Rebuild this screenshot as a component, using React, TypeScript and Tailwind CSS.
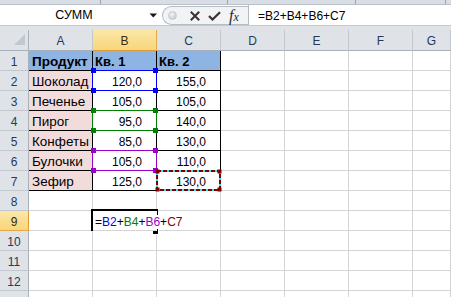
import React from 'react';

const COLS = ['A', 'B', 'C', 'D', 'E', 'F', 'G'];

type CellDef = { text?: React.ReactNode; kind?: 'label' | 'num' | 'head' };

const table: Record<number, CellDef[]> = {
  1: [
    { text: 'Продукт', kind: 'head' },
    { text: 'Кв. 1', kind: 'head' },
    { text: 'Кв. 2', kind: 'head' },
  ],
  2: [{ text: 'Шоколад', kind: 'label' }, { text: '120,0', kind: 'num' }, { text: '155,0', kind: 'num' }],
  3: [{ text: 'Печенье', kind: 'label' }, { text: '105,0', kind: 'num' }, { text: '105,0', kind: 'num' }],
  4: [{ text: 'Пирог', kind: 'label' }, { text: '95,0', kind: 'num' }, { text: '140,0', kind: 'num' }],
  5: [{ text: 'Конфеты', kind: 'label' }, { text: '85,0', kind: 'num' }, { text: '130,0', kind: 'num' }],
  6: [{ text: 'Булочки', kind: 'label' }, { text: '105,0', kind: 'num' }, { text: '110,0', kind: 'num' }],
  7: [{ text: 'Зефир', kind: 'label' }, { text: '125,0', kind: 'num' }, { text: '130,0', kind: 'num' }],
};

function Corner({ x, y, color }: { x: number; y: number; color: string }) {
  return (
    <div
      className="absolute w-[5px] h-[5px] z-20"
      style={{ left: x, top: y, backgroundColor: color }}
    />
  );
}

function RangeBox({ top, color }: { top: number; color: string }) {
  return (
    <>
      <div
        className="absolute z-20 border pointer-events-none"
        style={{ left: 92, top, width: 65, height: 21, borderColor: color }}
      />
      <Corner x={91} y={top - 2} color={color} />
      <Corner x={153} y={top - 2} color={color} />
      <Corner x={91} y={top + 18} color={color} />
      <Corner x={153} y={top + 18} color={color} />
    </>
  );
}

function FormulaText() {
  return (
    <>
      <span className="text-black">=</span>
      <span className="text-[#0000ff]">B2</span>
      <span className="text-black">+</span>
      <span className="text-[#008000]">B4</span>
      <span className="text-black">+</span>
      <span className="text-[#9900cc]">B6</span>
      <span className="text-black">+</span>
      <span className="text-[#800000]">C7</span>
    </>
  );
}

function FormulaBar() {
  return (
    <div className="h-[30px] bg-[#dfe3e8] flex flex-col">
      <div className="h-[5px] bg-[#d9dee5] border-b border-[#b9c0c9] relative shrink-0">
        <div className="absolute left-[100px] top-0 h-[4px] w-px bg-[#9aa3ae]" />
        <div className="absolute left-[227px] top-0 h-[4px] w-px bg-[#9aa3ae]" />
        <div className="absolute left-[355px] top-0 h-[4px] w-px bg-[#9aa3ae]" />
        <div className="absolute left-[445px] top-0 h-[4px] w-px bg-[#9aa3ae]" />
      </div>
      <div className="h-[21px] flex bg-white border-b border-[#c3c9d1] shrink-0">
        <div className="w-[162px] flex items-center shrink-0">
          <div className="w-[148px] text-center text-[12.5px] text-black leading-none pt-[1px]">СУММ</div>
          <svg width="9" height="5" viewBox="0 0 9 5" className="ml-[1px]">
            <polygon points="0.5,0.5 8,0.5 4.25,4.5" fill="#1a1a1a" />
          </svg>
        </div>
        <div className="w-[86px] h-[19px] mt-[1px] rounded-l-full border border-r-0 border-[#b4bcc6] bg-[#f2f3f5] flex items-center shrink-0">
          <div className="w-[9px] h-[9px] rounded-full ml-[5px] bg-[radial-gradient(circle_at_40%_35%,#f4f5f7,#b9bec6)] border border-[#c7ccd3]" />
          <svg width="10" height="10" viewBox="0 0 10 10" className="ml-[13px]">
            <path d="M1.5 1.5 L8.5 8.5 M8.5 1.5 L1.5 8.5" stroke="#3a3230" strokeWidth="2" strokeLinecap="square" />
          </svg>
          <svg width="13" height="10" viewBox="0 0 13 10" className="ml-[8px]">
            <path d="M1 5 L4.5 8.5 L12 1.2" stroke="#3a3230" strokeWidth="2.2" fill="none" strokeLinejoin="miter" />
          </svg>
          <span className="ml-[8px] font-['Liberation_Serif',serif] italic text-[#2a2a2a] leading-none">
            <span className="text-[16px]">f</span>
            <span className="text-[12px]">x</span>
          </span>
        </div>
        <div className="flex-1 border-l border-[#b4bcc6] flex items-center pl-[9px] text-[12px] text-black leading-none pt-[1px]">
          =B2+B4+B6+C7
        </div>
      </div>
    </div>
  );
}

function HeaderRow() {
  return (
    <div className="h-[21px] flex">
      <div className="w-[29px] shrink-0 bg-[#dfe3e8] border-r border-b border-[#a8b0ba] relative">
        <svg width="13" height="12" viewBox="0 0 13 12" className="absolute right-[2px] bottom-[4px]">
          <polygon points="12,0 12,11 1,11" fill="#c3c8ce" />
        </svg>
      </div>
      {COLS.map((c, i) => {
        const sel = c === 'B';
        return (
          <div
            key={c}
            className={
              (i < 6 ? 'w-[64px] shrink-0 ' : 'flex-1 ') +
              'flex items-end justify-center pb-[3px] leading-none text-[12px] border-r border-b ' +
              (sel
                ? 'bg-[linear-gradient(#fbe7a6,#f8d67a)] border-r-[#e5a84a] border-b-[#e09a3a] text-[#3b2a10]'
                : 'bg-[#dfe3e8] border-r-[#c2c8d0] border-b-[#a8b0ba] text-[#25395a]')
            }
          >
            {c}
          </div>
        );
      })}
    </div>
  );
}

function DataRow({ r }: { r: number }) {
  const rowSel = r === 9;
  return (
    <div className="h-[20px] flex">
      <div
        className={
          'w-[29px] shrink-0 flex items-end justify-center pb-[2px] leading-none text-[12px] border-r border-b ' +
          (rowSel
            ? 'bg-[linear-gradient(#fbe7a6,#f8d67a)] border-r-[#e09a3a] border-b-[#e5a84a] text-[#3b2a10]'
            : 'bg-[#dfe3e8] border-r-[#a8b0ba] border-b-[#c2c8d0] text-[#25395a]')
        }
      >
        {r <= 12 ? r : null}
      </div>
      {COLS.map((c, i) => {
        const inTable = r <= 7 && i < 3;
        const def = table[r]?.[i];
        let bg = 'bg-white';
        if (r === 1 && i < 3) bg = 'bg-[#8db4e2]';
        else if (i === 0 && r >= 2 && r <= 7) bg = 'bg-[#f2dcdb]';
        const border = inTable ? 'border-black' : 'border-[#d4d4d4]';
        const isActive = r === 9 && c === 'B';
        let content: React.ReactNode = null;
        let align = 'justify-start';
        let textCls = '';
        if (def) {
          if (def.kind === 'head') {
            textCls = i === 0 ? 'pl-[3px] text-[13.5px] font-bold' : 'pl-[2px] text-[13px] font-bold';
          } else if (def.kind === 'label') {
            textCls = 'pl-[3px] text-[13.5px]';
          } else {
            textCls = 'pr-[14px] text-[12px]';
            align = 'justify-end';
          }
          content = def.text;
        }
        if (isActive) {
          textCls = 'pl-[2px] text-[12px] relative z-30 whitespace-nowrap overflow-visible';
          content = <FormulaText />;
        }
        return (
          <div
            key={c}
            className={
              (i < 6 ? 'w-[64px] shrink-0 ' : 'flex-1 ') +
              'flex items-end pb-[2px] leading-none text-black border-r border-b ' +
              border +
              ' ' +
              bg +
              ' ' +
              align +
              ' ' +
              textCls +
              (isActive ? ' border-r-white overflow-visible' : ' overflow-hidden')
            }
          >
            {content}
          </div>
        );
      })}
    </div>
  );
}

export default function App() {
  const rows = Array.from({ length: 13 }, (_, i) => i + 1);
  return (
    <div className="relative w-[451px] h-[297px] overflow-hidden bg-white font-['Liberation_Sans',Arial,sans-serif]">
      <FormulaBar />
      <HeaderRow />
      {rows.map((r) => (
        <DataRow key={r} r={r} />
      ))}

      {/* reference ranges */}
      <RangeBox top={70} color="#0000ff" />
      <RangeBox top={110} color="#008000" />
      <RangeBox top={150} color="#9900cc" />

      {/* C7 marching ants */}
      <svg className="absolute z-20 pointer-events-none" style={{ left: 155, top: 169 }} width="67" height="23" viewBox="0 0 67 23">
        <rect x="2" y="2" width="63" height="19" fill="none" stroke="#33e6e6" strokeWidth="2" />
        <rect x="2" y="2" width="63" height="19" fill="none" stroke="#800000" strokeWidth="2" strokeDasharray="4 2" />
        <rect x="0.5" y="0.5" width="4" height="4" fill="#800000" />
        <rect x="62.5" y="0.5" width="4" height="4" fill="#800000" />
        <rect x="0.5" y="18.5" width="4" height="4" fill="#800000" />
        <rect x="62.5" y="18.5" width="4" height="4" fill="#800000" />
      </svg>

      {/* active cell B9 */}
      <div
        className="absolute z-20 border-l-2 border-t-2 border-b-2 border-black pointer-events-none"
        style={{ left: 91, top: 209, width: 66, height: 22 }}
      />
      <div className="absolute z-20 bg-black" style={{ left: 156, top: 209, width: 2, height: 6 }} />
      <div className="absolute z-20 bg-black border border-white" style={{ left: 152, top: 228, width: 7, height: 7 }} />
    </div>
  );
}
